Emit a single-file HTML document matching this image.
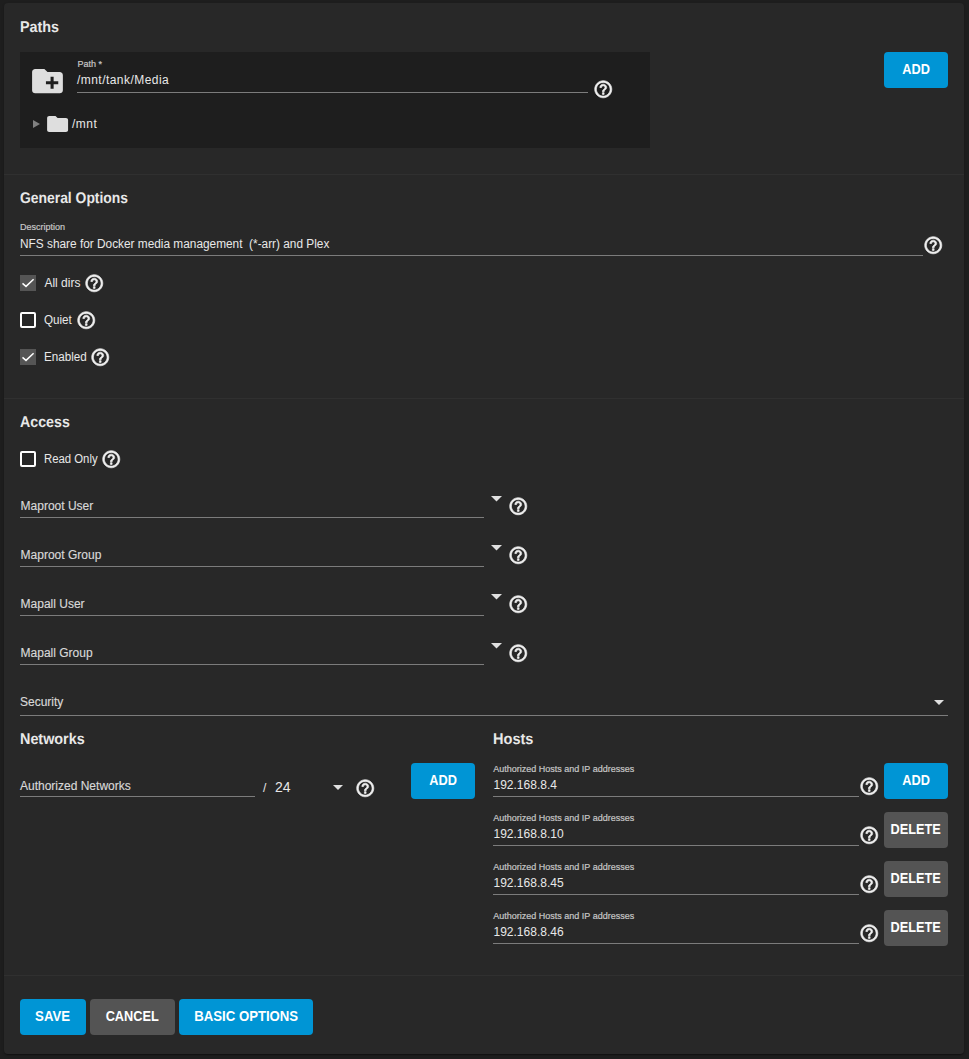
<!DOCTYPE html><html><head><meta charset="utf-8"><style>
html,body{margin:0;padding:0}body{width:969px;height:1059px;background:#1e1e1e;position:relative;overflow:hidden;font-family:"Liberation Sans",sans-serif}
.t{position:absolute;white-space:pre;line-height:0}.r{position:absolute;display:block}
.btn{position:absolute;border-radius:4px;color:#fff;font-weight:bold;text-align:center;white-space:nowrap}
</style></head><body>
<div class="r" style="left:4px;top:3px;width:960px;height:1051px;background:#282828;border-radius:4px;box-shadow:0 2px 1px -1px rgba(0,0,0,.2),0 1px 1px 0 rgba(0,0,0,.14),0 1px 3px 0 rgba(0,0,0,.12)"></div>
<div class="r" style="left:4px;top:174px;width:960px;height:1px;background:#303030;"></div>
<div class="r" style="left:4px;top:398px;width:960px;height:1px;background:#303030;"></div>
<div class="r" style="left:4px;top:975px;width:960px;height:1px;background:#303030;"></div>
<div class="t" style="left:19.7px;top:28px;font-size:15.5px;font-weight:bold;color:#e8e8e8;transform:scaleX(0.926);transform-origin:0 0;text-rendering:geometricPrecision;">Paths</div>
<div class="r" style="left:20px;top:52px;width:630px;height:96px;background:#1e1e1e;"></div>
<svg class="r" style="left:28.619999999999997px;top:62.9324px" width="36.96" height="36.4056" viewBox="0 0 24 24" preserveAspectRatio="none"><path fill="#dedede" d="M20 6h-8l-2-2H4c-1.1 0-1.99.9-1.99 2L2 18c0 1.1.9 2 2 2h16c1.1 0 2-.9 2-2V8c0-1.1-.9-2-2-2zm-1 8h-3v3h-2v-3h-3v-2h3V9h2v3h3v2z"/></svg>
<div class="t" style="left:77.5px;top:64px;font-size:9px;font-weight:normal;color:#c6c6c6;-webkit-text-stroke:0.2px #c6c6c6;">Path *</div>
<div class="t" style="left:77px;top:80px;font-size:12px;font-weight:normal;color:#e8e8e8;letter-spacing:0.45px;">/mnt/tank/Media</div>
<div class="r" style="left:77px;top:92px;width:511px;height:1px;background:#7c7c7c;"></div>
<svg class="r" style="left:592.75px;top:78.55px" width="20.5" height="20.5" viewBox="0 0 24 24" fill="#f0f0f0" stroke="#f0f0f0" stroke-width="0.8"><path d="M11 18h2v-2h-2v2zm1-16C6.48 2 2 6.48 2 12s4.48 10 10 10 10-4.48 10-10S17.52 2 12 2zm0 18c-4.41 0-8-3.59-8-8s3.59-8 8-8 8 3.59 8 8-3.59 8-8 8zm0-14c-2.21 0-4 1.79-4 4h2c0-1.1.9-2 2-2s2 .9 2 2c0 2-3 1.75-3 5h2c0-2.25 3-2.5 3-5 0-2.21-1.79-4-4-4z"/></svg>
<svg class="r" style="left:33px;top:120px" width="7" height="8" viewBox="0 0 7 8"><path d="M0 0L7 4L0 8Z" fill="#808080"/></svg>
<svg class="r" style="left:44.5px;top:112px" width="25.200000000000003" height="24" viewBox="0 0 24 24" preserveAspectRatio="none"><path fill="#dedede" d="M10 4H4c-1.1 0-1.99.9-1.99 2L2 18c0 1.1.9 2 2 2h16c1.1 0 2-.9 2-2V8c0-1.1-.9-2-2-2h-8l-2-2z"/></svg>
<div class="t" style="left:72px;top:124px;font-size:12px;font-weight:normal;color:#e8e8e8;letter-spacing:0.5px;">/mnt</div>
<div class="btn" style="left:884px;top:52px;width:64px;height:36px;line-height:34px;background:#0095d5;font-size:14px"><span style="display:inline-block;transform:scaleX(0.91)">ADD</span></div>
<div class="t" style="left:20.2px;top:199px;font-size:15.5px;font-weight:bold;color:#e8e8e8;transform:scaleX(0.896);transform-origin:0 0;text-rendering:geometricPrecision;">General Options</div>
<div class="t" style="left:20px;top:227px;font-size:9px;font-weight:normal;color:#c6c6c6;-webkit-text-stroke:0.2px #c6c6c6;">Description</div>
<div class="t" style="left:19.5px;top:244px;font-size:12px;font-weight:normal;color:#e8e8e8;transform:scaleX(0.987);transform-origin:0 0;">NFS share for Docker media management  (*-arr) and Plex</div>
<div class="r" style="left:20px;top:255px;width:903px;height:1px;background:#7c7c7c;"></div>
<svg class="r" style="left:922.75px;top:234.75px" width="20.5" height="20.5" viewBox="0 0 24 24" fill="#f0f0f0" stroke="#f0f0f0" stroke-width="0.8"><path d="M11 18h2v-2h-2v2zm1-16C6.48 2 2 6.48 2 12s4.48 10 10 10 10-4.48 10-10S17.52 2 12 2zm0 18c-4.41 0-8-3.59-8-8s3.59-8 8-8 8 3.59 8 8-3.59 8-8 8zm0-14c-2.21 0-4 1.79-4 4h2c0-1.1.9-2 2-2s2 .9 2 2c0 2-3 1.75-3 5h2c0-2.25 3-2.5 3-5 0-2.21-1.79-4-4-4z"/></svg>
<div class="r" style="left:20px;top:275px;width:16px;height:16px;background:#555"></div>
<svg class="r" style="left:20px;top:275px" width="16" height="16" viewBox="0 0 16 16"><path d="M2.5 8.4L6 11.4L13.6 4.3" fill="none" stroke="#fff" stroke-width="1.5"/></svg>
<div class="t" style="left:44.4px;top:283px;font-size:12px;font-weight:normal;color:#e8e8e8;">All dirs</div>
<svg class="r" style="left:84.35px;top:272.75px" width="20.5" height="20.5" viewBox="0 0 24 24" fill="#f0f0f0" stroke="#f0f0f0" stroke-width="0.8"><path d="M11 18h2v-2h-2v2zm1-16C6.48 2 2 6.48 2 12s4.48 10 10 10 10-4.48 10-10S17.52 2 12 2zm0 18c-4.41 0-8-3.59-8-8s3.59-8 8-8 8 3.59 8 8-3.59 8-8 8zm0-14c-2.21 0-4 1.79-4 4h2c0-1.1.9-2 2-2s2 .9 2 2c0 2-3 1.75-3 5h2c0-2.25 3-2.5 3-5 0-2.21-1.79-4-4-4z"/></svg>
<div class="r" style="left:20px;top:312px;width:12px;height:12px;border:2px solid #fff;border-radius:2px"></div>
<div class="t" style="left:44.1px;top:320px;font-size:12px;font-weight:normal;color:#e8e8e8;transform:scaleX(0.97);transform-origin:0 0;">Quiet</div>
<svg class="r" style="left:75.75px;top:309.75px" width="20.5" height="20.5" viewBox="0 0 24 24" fill="#f0f0f0" stroke="#f0f0f0" stroke-width="0.8"><path d="M11 18h2v-2h-2v2zm1-16C6.48 2 2 6.48 2 12s4.48 10 10 10 10-4.48 10-10S17.52 2 12 2zm0 18c-4.41 0-8-3.59-8-8s3.59-8 8-8 8 3.59 8 8-3.59 8-8 8zm0-14c-2.21 0-4 1.79-4 4h2c0-1.1.9-2 2-2s2 .9 2 2c0 2-3 1.75-3 5h2c0-2.25 3-2.5 3-5 0-2.21-1.79-4-4-4z"/></svg>
<div class="r" style="left:20px;top:349px;width:16px;height:16px;background:#555"></div>
<svg class="r" style="left:20px;top:349px" width="16" height="16" viewBox="0 0 16 16"><path d="M2.5 8.4L6 11.4L13.6 4.3" fill="none" stroke="#fff" stroke-width="1.5"/></svg>
<div class="t" style="left:44px;top:357px;font-size:12px;font-weight:normal;color:#e8e8e8;transform:scaleX(0.972);transform-origin:0 0;">Enabled</div>
<svg class="r" style="left:90.45px;top:346.75px" width="20.5" height="20.5" viewBox="0 0 24 24" fill="#f0f0f0" stroke="#f0f0f0" stroke-width="0.8"><path d="M11 18h2v-2h-2v2zm1-16C6.48 2 2 6.48 2 12s4.48 10 10 10 10-4.48 10-10S17.52 2 12 2zm0 18c-4.41 0-8-3.59-8-8s3.59-8 8-8 8 3.59 8 8-3.59 8-8 8zm0-14c-2.21 0-4 1.79-4 4h2c0-1.1.9-2 2-2s2 .9 2 2c0 2-3 1.75-3 5h2c0-2.25 3-2.5 3-5 0-2.21-1.79-4-4-4z"/></svg>
<div class="t" style="left:19.7px;top:423px;font-size:15.5px;font-weight:bold;color:#e8e8e8;transform:scaleX(0.917);transform-origin:0 0;text-rendering:geometricPrecision;">Access</div>
<div class="r" style="left:20px;top:451px;width:12px;height:12px;border:2px solid #fff;border-radius:2px"></div>
<div class="t" style="left:44px;top:459px;font-size:12px;font-weight:normal;color:#e8e8e8;transform:scaleX(0.945);transform-origin:0 0;">Read Only</div>
<svg class="r" style="left:101.45px;top:448.75px" width="20.5" height="20.5" viewBox="0 0 24 24" fill="#f0f0f0" stroke="#f0f0f0" stroke-width="0.8"><path d="M11 18h2v-2h-2v2zm1-16C6.48 2 2 6.48 2 12s4.48 10 10 10 10-4.48 10-10S17.52 2 12 2zm0 18c-4.41 0-8-3.59-8-8s3.59-8 8-8 8 3.59 8 8-3.59 8-8 8zm0-14c-2.21 0-4 1.79-4 4h2c0-1.1.9-2 2-2s2 .9 2 2c0 2-3 1.75-3 5h2c0-2.25 3-2.5 3-5 0-2.21-1.79-4-4-4z"/></svg>
<div class="t" style="left:20.6px;top:506px;font-size:12px;font-weight:normal;color:#d8d8d8;-webkit-text-stroke:0.15px #d8d8d8;">Maproot User</div>
<div class="r" style="left:20px;top:517px;width:464px;height:1px;background:#7c7c7c;"></div>
<svg class="r" style="left:490.6px;top:496px" width="11" height="5.5" viewBox="0 0 11 5.5"><path d="M0 0H11L5.5 5.5Z" fill="#e0e0e0"/></svg>
<svg class="r" style="left:507.75px;top:495.75px" width="20.5" height="20.5" viewBox="0 0 24 24" fill="#f0f0f0" stroke="#f0f0f0" stroke-width="0.8"><path d="M11 18h2v-2h-2v2zm1-16C6.48 2 2 6.48 2 12s4.48 10 10 10 10-4.48 10-10S17.52 2 12 2zm0 18c-4.41 0-8-3.59-8-8s3.59-8 8-8 8 3.59 8 8-3.59 8-8 8zm0-14c-2.21 0-4 1.79-4 4h2c0-1.1.9-2 2-2s2 .9 2 2c0 2-3 1.75-3 5h2c0-2.25 3-2.5 3-5 0-2.21-1.79-4-4-4z"/></svg>
<div class="t" style="left:20.6px;top:555px;font-size:12px;font-weight:normal;color:#d8d8d8;-webkit-text-stroke:0.15px #d8d8d8;">Maproot Group</div>
<div class="r" style="left:20px;top:566px;width:464px;height:1px;background:#7c7c7c;"></div>
<svg class="r" style="left:490.6px;top:545px" width="11" height="5.5" viewBox="0 0 11 5.5"><path d="M0 0H11L5.5 5.5Z" fill="#e0e0e0"/></svg>
<svg class="r" style="left:507.75px;top:544.75px" width="20.5" height="20.5" viewBox="0 0 24 24" fill="#f0f0f0" stroke="#f0f0f0" stroke-width="0.8"><path d="M11 18h2v-2h-2v2zm1-16C6.48 2 2 6.48 2 12s4.48 10 10 10 10-4.48 10-10S17.52 2 12 2zm0 18c-4.41 0-8-3.59-8-8s3.59-8 8-8 8 3.59 8 8-3.59 8-8 8zm0-14c-2.21 0-4 1.79-4 4h2c0-1.1.9-2 2-2s2 .9 2 2c0 2-3 1.75-3 5h2c0-2.25 3-2.5 3-5 0-2.21-1.79-4-4-4z"/></svg>
<div class="t" style="left:20.6px;top:604px;font-size:12px;font-weight:normal;color:#d8d8d8;-webkit-text-stroke:0.15px #d8d8d8;">Mapall User</div>
<div class="r" style="left:20px;top:615px;width:464px;height:1px;background:#7c7c7c;"></div>
<svg class="r" style="left:490.6px;top:594px" width="11" height="5.5" viewBox="0 0 11 5.5"><path d="M0 0H11L5.5 5.5Z" fill="#e0e0e0"/></svg>
<svg class="r" style="left:507.75px;top:593.75px" width="20.5" height="20.5" viewBox="0 0 24 24" fill="#f0f0f0" stroke="#f0f0f0" stroke-width="0.8"><path d="M11 18h2v-2h-2v2zm1-16C6.48 2 2 6.48 2 12s4.48 10 10 10 10-4.48 10-10S17.52 2 12 2zm0 18c-4.41 0-8-3.59-8-8s3.59-8 8-8 8 3.59 8 8-3.59 8-8 8zm0-14c-2.21 0-4 1.79-4 4h2c0-1.1.9-2 2-2s2 .9 2 2c0 2-3 1.75-3 5h2c0-2.25 3-2.5 3-5 0-2.21-1.79-4-4-4z"/></svg>
<div class="t" style="left:20.6px;top:653px;font-size:12px;font-weight:normal;color:#d8d8d8;-webkit-text-stroke:0.15px #d8d8d8;">Mapall Group</div>
<div class="r" style="left:20px;top:664px;width:464px;height:1px;background:#7c7c7c;"></div>
<svg class="r" style="left:490.6px;top:643px" width="11" height="5.5" viewBox="0 0 11 5.5"><path d="M0 0H11L5.5 5.5Z" fill="#e0e0e0"/></svg>
<svg class="r" style="left:507.75px;top:642.75px" width="20.5" height="20.5" viewBox="0 0 24 24" fill="#f0f0f0" stroke="#f0f0f0" stroke-width="0.8"><path d="M11 18h2v-2h-2v2zm1-16C6.48 2 2 6.48 2 12s4.48 10 10 10 10-4.48 10-10S17.52 2 12 2zm0 18c-4.41 0-8-3.59-8-8s3.59-8 8-8 8 3.59 8 8-3.59 8-8 8zm0-14c-2.21 0-4 1.79-4 4h2c0-1.1.9-2 2-2s2 .9 2 2c0 2-3 1.75-3 5h2c0-2.25 3-2.5 3-5 0-2.21-1.79-4-4-4z"/></svg>
<div class="t" style="left:20px;top:702px;font-size:12px;font-weight:normal;color:#d8d8d8;-webkit-text-stroke:0.15px #d8d8d8;">Security</div>
<div class="r" style="left:20px;top:715px;width:928px;height:1px;background:#7c7c7c;"></div>
<svg class="r" style="left:934px;top:700px" width="10" height="5" viewBox="0 0 10 5"><path d="M0 0H10L5.0 5Z" fill="#e0e0e0"/></svg>
<div class="t" style="left:20.1px;top:740px;font-size:15.5px;font-weight:bold;color:#e8e8e8;transform:scaleX(0.927);transform-origin:0 0;text-rendering:geometricPrecision;">Networks</div>
<div class="t" style="left:20px;top:786px;font-size:12px;font-weight:normal;color:#d8d8d8;-webkit-text-stroke:0.15px #d8d8d8;">Authorized Networks</div>
<div class="r" style="left:20px;top:796px;width:235px;height:1px;background:#7c7c7c;"></div>
<div class="t" style="left:263px;top:788px;font-size:12px;font-weight:normal;color:#e8e8e8;">/</div>
<div class="t" style="left:275px;top:787px;font-size:14px;font-weight:normal;color:#e8e8e8;">24</div>
<svg class="r" style="left:333px;top:785px" width="10" height="5" viewBox="0 0 10 5"><path d="M0 0H10L5.0 5Z" fill="#e0e0e0"/></svg>
<svg class="r" style="left:354.75px;top:777.75px" width="20.5" height="20.5" viewBox="0 0 24 24" fill="#f0f0f0" stroke="#f0f0f0" stroke-width="0.8"><path d="M11 18h2v-2h-2v2zm1-16C6.48 2 2 6.48 2 12s4.48 10 10 10 10-4.48 10-10S17.52 2 12 2zm0 18c-4.41 0-8-3.59-8-8s3.59-8 8-8 8 3.59 8 8-3.59 8-8 8zm0-14c-2.21 0-4 1.79-4 4h2c0-1.1.9-2 2-2s2 .9 2 2c0 2-3 1.75-3 5h2c0-2.25 3-2.5 3-5 0-2.21-1.79-4-4-4z"/></svg>
<div class="btn" style="left:411px;top:763px;width:64px;height:36px;line-height:34px;background:#0095d5;font-size:14px"><span style="display:inline-block;transform:scaleX(0.91)">ADD</span></div>
<div class="t" style="left:493px;top:740px;font-size:15.5px;font-weight:bold;color:#e8e8e8;transform:scaleX(0.938);transform-origin:0 0;text-rendering:geometricPrecision;">Hosts</div>
<div class="t" style="left:493.3px;top:769px;font-size:9px;font-weight:normal;color:#c6c6c6;-webkit-text-stroke:0.2px #c6c6c6;">Authorized Hosts and IP addresses</div>
<div class="t" style="left:493.5px;top:785px;font-size:12px;font-weight:normal;color:#e8e8e8;">192.168.8.4</div>
<div class="r" style="left:493px;top:796px;width:366px;height:1px;background:#7c7c7c;"></div>
<svg class="r" style="left:858.75px;top:775.75px" width="20.5" height="20.5" viewBox="0 0 24 24" fill="#f0f0f0" stroke="#f0f0f0" stroke-width="0.8"><path d="M11 18h2v-2h-2v2zm1-16C6.48 2 2 6.48 2 12s4.48 10 10 10 10-4.48 10-10S17.52 2 12 2zm0 18c-4.41 0-8-3.59-8-8s3.59-8 8-8 8 3.59 8 8-3.59 8-8 8zm0-14c-2.21 0-4 1.79-4 4h2c0-1.1.9-2 2-2s2 .9 2 2c0 2-3 1.75-3 5h2c0-2.25 3-2.5 3-5 0-2.21-1.79-4-4-4z"/></svg>
<div class="btn" style="left:884px;top:763px;width:64px;height:36px;line-height:34px;background:#0095d5;font-size:14px"><span style="display:inline-block;transform:scaleX(0.91)">ADD</span></div>
<div class="t" style="left:493.3px;top:818px;font-size:9px;font-weight:normal;color:#c6c6c6;-webkit-text-stroke:0.2px #c6c6c6;">Authorized Hosts and IP addresses</div>
<div class="t" style="left:493.5px;top:834px;font-size:12px;font-weight:normal;color:#e8e8e8;">192.168.8.10</div>
<div class="r" style="left:493px;top:845px;width:366px;height:1px;background:#7c7c7c;"></div>
<svg class="r" style="left:858.75px;top:824.75px" width="20.5" height="20.5" viewBox="0 0 24 24" fill="#f0f0f0" stroke="#f0f0f0" stroke-width="0.8"><path d="M11 18h2v-2h-2v2zm1-16C6.48 2 2 6.48 2 12s4.48 10 10 10 10-4.48 10-10S17.52 2 12 2zm0 18c-4.41 0-8-3.59-8-8s3.59-8 8-8 8 3.59 8 8-3.59 8-8 8zm0-14c-2.21 0-4 1.79-4 4h2c0-1.1.9-2 2-2s2 .9 2 2c0 2-3 1.75-3 5h2c0-2.25 3-2.5 3-5 0-2.21-1.79-4-4-4z"/></svg>
<div class="btn" style="left:884px;top:812px;width:64px;height:36px;line-height:34px;background:#545454;font-size:14px"><span style="display:inline-block;transform:scaleX(0.91)">DELETE</span></div>
<div class="t" style="left:493.3px;top:867px;font-size:9px;font-weight:normal;color:#c6c6c6;-webkit-text-stroke:0.2px #c6c6c6;">Authorized Hosts and IP addresses</div>
<div class="t" style="left:493.5px;top:883px;font-size:12px;font-weight:normal;color:#e8e8e8;">192.168.8.45</div>
<div class="r" style="left:493px;top:894px;width:366px;height:1px;background:#7c7c7c;"></div>
<svg class="r" style="left:858.75px;top:873.75px" width="20.5" height="20.5" viewBox="0 0 24 24" fill="#f0f0f0" stroke="#f0f0f0" stroke-width="0.8"><path d="M11 18h2v-2h-2v2zm1-16C6.48 2 2 6.48 2 12s4.48 10 10 10 10-4.48 10-10S17.52 2 12 2zm0 18c-4.41 0-8-3.59-8-8s3.59-8 8-8 8 3.59 8 8-3.59 8-8 8zm0-14c-2.21 0-4 1.79-4 4h2c0-1.1.9-2 2-2s2 .9 2 2c0 2-3 1.75-3 5h2c0-2.25 3-2.5 3-5 0-2.21-1.79-4-4-4z"/></svg>
<div class="btn" style="left:884px;top:861px;width:64px;height:36px;line-height:34px;background:#545454;font-size:14px"><span style="display:inline-block;transform:scaleX(0.91)">DELETE</span></div>
<div class="t" style="left:493.3px;top:916px;font-size:9px;font-weight:normal;color:#c6c6c6;-webkit-text-stroke:0.2px #c6c6c6;">Authorized Hosts and IP addresses</div>
<div class="t" style="left:493.5px;top:932px;font-size:12px;font-weight:normal;color:#e8e8e8;">192.168.8.46</div>
<div class="r" style="left:493px;top:943px;width:366px;height:1px;background:#7c7c7c;"></div>
<svg class="r" style="left:858.75px;top:922.75px" width="20.5" height="20.5" viewBox="0 0 24 24" fill="#f0f0f0" stroke="#f0f0f0" stroke-width="0.8"><path d="M11 18h2v-2h-2v2zm1-16C6.48 2 2 6.48 2 12s4.48 10 10 10 10-4.48 10-10S17.52 2 12 2zm0 18c-4.41 0-8-3.59-8-8s3.59-8 8-8 8 3.59 8 8-3.59 8-8 8zm0-14c-2.21 0-4 1.79-4 4h2c0-1.1.9-2 2-2s2 .9 2 2c0 2-3 1.75-3 5h2c0-2.25 3-2.5 3-5 0-2.21-1.79-4-4-4z"/></svg>
<div class="btn" style="left:884px;top:910px;width:64px;height:36px;line-height:34px;background:#545454;font-size:14px"><span style="display:inline-block;transform:scaleX(0.91)">DELETE</span></div>
<div class="btn" style="left:20px;top:999px;width:66px;height:36px;line-height:34px;background:#0095d5;font-size:14px"><span style="display:inline-block;transform:scaleX(0.94)">SAVE</span></div>
<div class="btn" style="left:90px;top:999px;width:85px;height:36px;line-height:34px;background:#545454;font-size:14px"><span style="display:inline-block;transform:scaleX(0.91)">CANCEL</span></div>
<div class="btn" style="left:179px;top:999px;width:134px;height:36px;line-height:34px;background:#0095d5;font-size:14px"><span style="display:inline-block;transform:scaleX(0.94)">BASIC OPTIONS</span></div>
</body></html>
